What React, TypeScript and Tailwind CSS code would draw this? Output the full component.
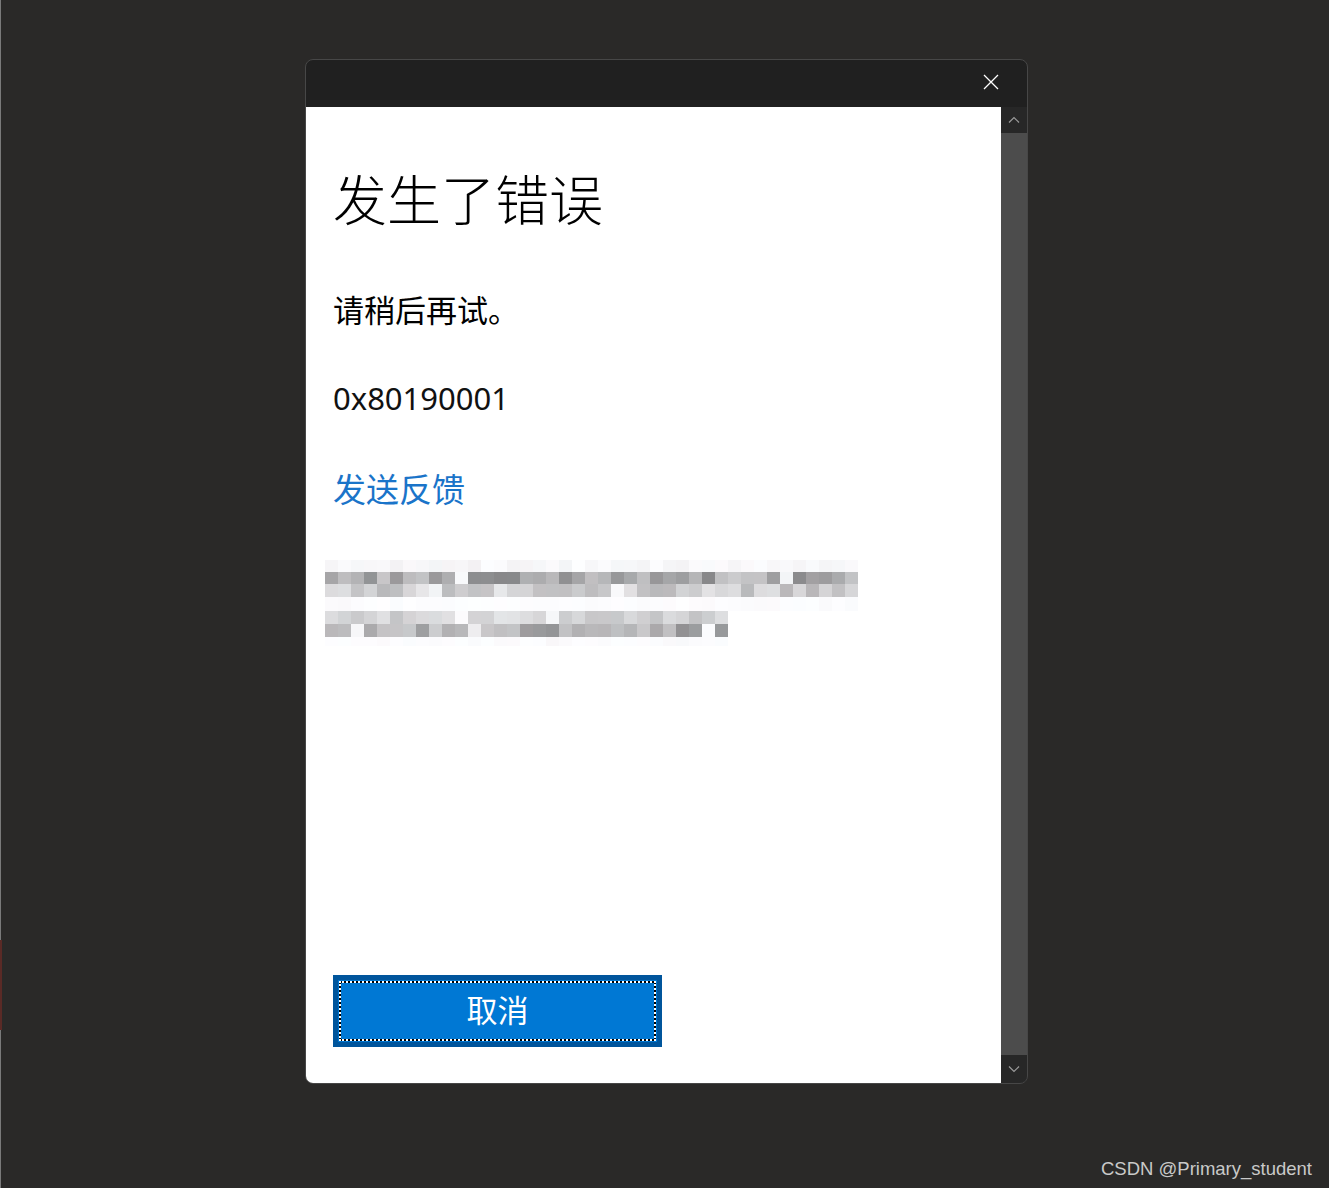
import React from "react";

function rand(seed: number) {
  let s = seed;
  return () => {
    s = (s * 16807) % 2147483647;
    return (s - 1) / 2147483646;
  };
}

function gray(v: number, tint = 0) {
  const c = Math.max(0, Math.min(255, Math.round(v)));
  return `rgb(${c},${c + tint},${Math.min(255, c + tint + 2)})`;
}

function Mosaic() {
  const r = rand(98765);
  const bw = 13;
  const rects: React.ReactNode[] = [];
  const x0 = 15; // svg starts at x=310, blocks at 325
  const row = (y: number, h: number, n: number, lo: number, hi: number, gapP: number, key: string, gapLo = 238) => {
    for (let i = 0; i < n; i++) {
      const gap = r() < gapP;
      const v = gap ? gapLo + r() * (253 - gapLo) : lo + r() * (hi - lo);
      rects.push(
        <rect key={key + i} x={x0 + i * bw} y={y} width={bw} height={h} fill={gray(v, Math.round(r() * 4 - 2))} />
      );
    }
  };
  row(4, 12, 41, 242, 253, 0.4, "h1", 245);
  row(16, 12, 41, 135, 205, 0.06, "a1");
  row(28, 13, 41, 185, 232, 0.06, "a2");
  row(41, 14, 41, 250, 255, 0.5, "h2", 250);
  row(55, 13, 31, 195, 230, 0.08, "b1");
  row(68, 13, 31, 145, 205, 0.06, "b2");
  row(81, 9, 31, 248, 255, 0.5, "h3", 250);
  return (
    <svg width={560} height={92} viewBox="0 0 560 92" className="block">
      <rect x={0} y={0} width={560} height={92} fill="#ffffff" />
      {rects}
    </svg>
  );
}

export default function App() {
  return (
    <div className="relative min-h-[1188px] w-full bg-[#2a2928] overflow-hidden" style={{ fontFamily: '"Noto Sans", "Noto Sans CJK SC", sans-serif' }}>
      <div className="absolute left-0 top-0 h-full w-px bg-[#7a7a7a]" />
      <div className="absolute left-0 top-[940px] h-[90px] w-[2px] bg-[#5a2a26]" />

      <div className="ml-[305px] pt-[59px]">
        <div className="flex h-[1025px] w-[723px] flex-col overflow-hidden rounded-[8px] border border-[#474747] bg-[#202020]">
          {/* title bar */}
          <div className="flex h-[47px] shrink-0 items-start justify-end pr-[28px] pt-[14px]">
            <svg width="16" height="16" viewBox="0 0 16 16">
              <path d="M1 1 L15 15 M15 1 L1 15" stroke="#ffffff" strokeWidth="1.3" fill="none" />
            </svg>
          </div>
          <div className="flex flex-1">
            {/* content */}
            <div className="flex h-[976px] w-[695px] flex-col bg-white pl-[27px] pb-[36px]">
              <div
                className="mt-[64px] h-[54px] text-[54px] leading-[54px] font-light text-black"
                style={{ fontFamily: '"Noto Sans CJK SC", sans-serif' }}
              >
                发生了错误
              </div>
              <div
                className="mt-[68px] h-[31px] text-[31px] leading-[31px] text-black"
                style={{ fontFamily: '"Noto Sans CJK SC", sans-serif' }}
              >
                请稍后再试。
              </div>
              <div className="mt-[59px] h-[31px] text-[31px] leading-[31px] text-[#111111]" style={{ fontFamily: '"Noto Sans", sans-serif' }}>
                0x80190001
              </div>
              <div
                className="mt-[58px] h-[33px] text-[33px] leading-[33px] text-[#1a74c9]"
                style={{ fontFamily: '"Noto Sans CJK SC", sans-serif' }}
              >
                发送反馈
              </div>
              <div className="mt-[51px] -ml-[23px]">
                <Mosaic />
              </div>
              <div className="mt-auto">
                <div className="relative flex h-[72px] w-[329px] items-center justify-center border-[5px] border-[#00559c] bg-[#0078d4] pb-[6px]">
                  <div className="pointer-events-none absolute inset-[1px] border-2 border-black" />
                  <div className="pointer-events-none absolute inset-[1px] border-2 border-dotted border-white" />
                  <span
                    className="text-[31px] leading-[31px] text-white"
                    style={{ fontFamily: '"Noto Sans CJK SC", sans-serif' }}
                  >
                    取消
                  </span>
                </div>
              </div>
            </div>
            {/* scrollbar */}
            <div className="flex w-[26px] flex-col bg-[#4c4c4c]">
              <div className="flex h-[26px] items-center justify-center bg-[#272727]">
                <svg width="12" height="8" viewBox="0 0 12 8">
                  <path d="M1 6.5 L6 1.5 L11 6.5" stroke="#9a9a9a" strokeWidth="1.2" fill="none" />
                </svg>
              </div>
              <div className="flex-1" />
              <div className="flex h-[28px] items-center justify-center bg-[#272727]">
                <svg width="12" height="8" viewBox="0 0 12 8">
                  <path d="M1 1.5 L6 6.5 L11 1.5" stroke="#9a9a9a" strokeWidth="1.2" fill="none" />
                </svg>
              </div>
            </div>
          </div>
        </div>
      </div>

      <div
        className="absolute right-[17px] bottom-[9px] text-[18.5px] leading-[20px] text-[#c9c9c9]"
        style={{ fontFamily: '"Liberation Sans", Arial, sans-serif' }}
      >
        CSDN @Primary_student
      </div>
    </div>
  );
}
